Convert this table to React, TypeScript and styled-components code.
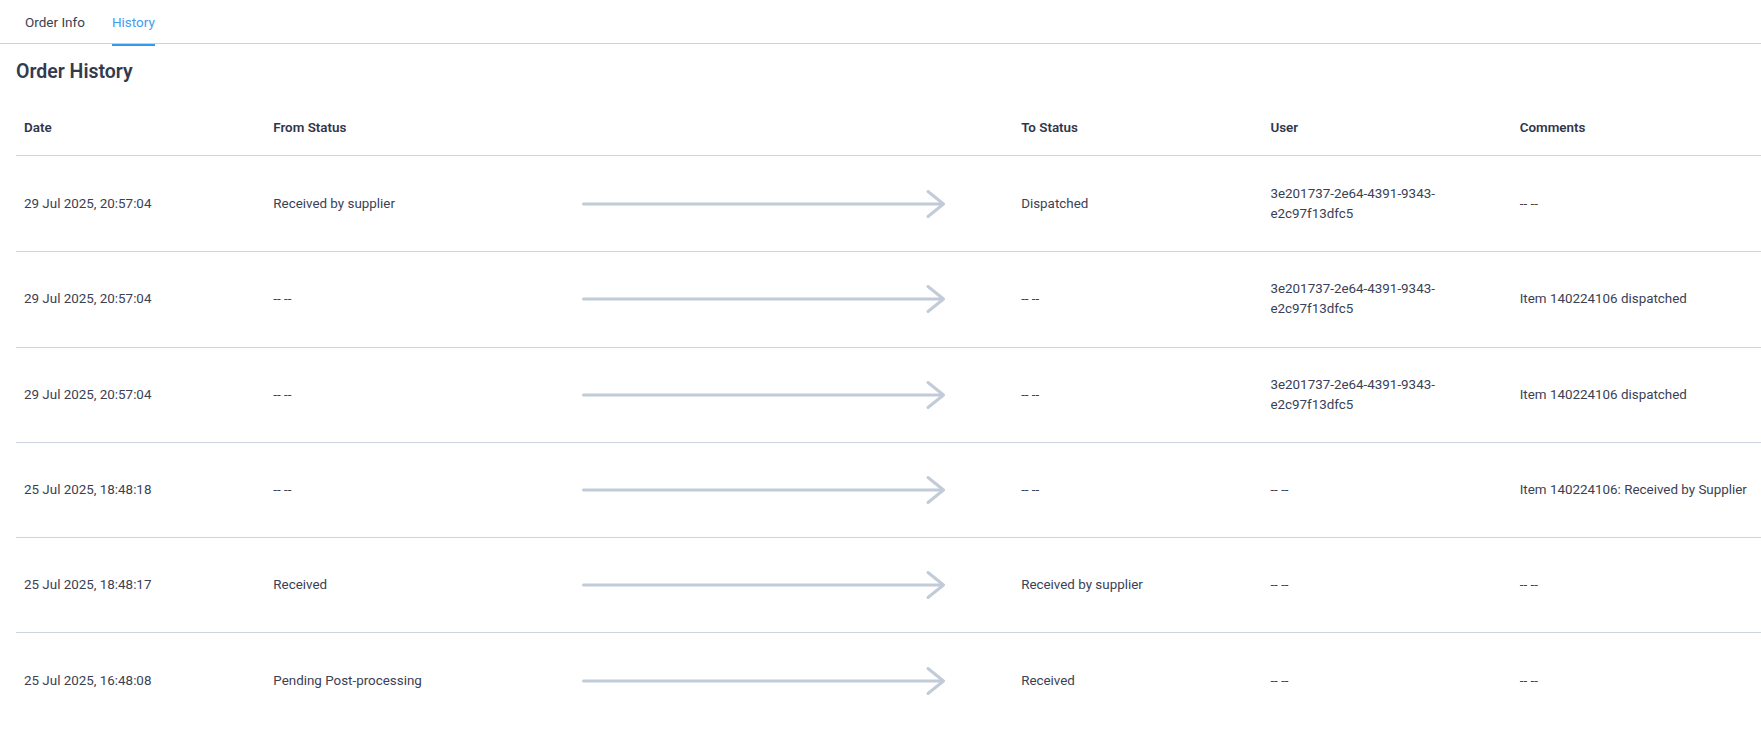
import React from "react";
import styled, { createGlobalStyle } from "styled-components";

const GlobalStyle = createGlobalStyle`
  * { box-sizing: border-box; }
  html, body { margin: 0; padding: 0; background: #ffffff; }
  body {
    font-family: Roboto, "Noto Sans", "Liberation Sans", sans-serif;
    color: #3b4154;
    -webkit-font-smoothing: antialiased;
  }
`;

const Page = styled.div`
  width: 1761px;
  background: #ffffff;
`;

const TabBar = styled.nav`
  display: flex;
  gap: 27px;
  height: 44px;
  padding-left: 25px;
  border-bottom: 1px solid #c9d1db;
`;

const Tab = styled.button<{ $active?: boolean }>`
  all: unset;
  display: flex;
  align-items: center;
  height: 43px;
  padding-bottom: 1px;
  font-family: Roboto, "Noto Sans", sans-serif;
  font-size: 13.5px;
  color: ${(p) => (p.$active ? "#3d9ef2" : "#3a3f50")};
  cursor: pointer;
  border-bottom: 2px solid ${(p) => (p.$active ? "#2f9bf0" : "transparent")};
`;

const Content = styled.section`
  padding: 16px 0 0 16px;
`;

const Title = styled.h2`
  margin: 0 0 16px 0;
  font-size: 19.5px;
  line-height: 24px;
  font-weight: 600;
  color: #343a4e;
`;

const Row = styled.div<{ $h: number }>`
  display: grid;
  grid-template-columns: repeat(7, 1fr);
  align-items: center;
  height: ${(p) => p.$h}px;
  border-bottom: 1px solid #cdd4de;
  &:last-child { border-bottom: none; }
`;

const HeadCell = styled.div<{ $span?: number }>`
  grid-column: span ${(p) => p.$span ?? 1};
  padding: 0 8px;
  font-size: 13.4px;
  font-weight: 600;
  color: #30364a;
`;

const Cell = styled.div`
  padding: 0 8px;
  font-size: 13.4px;
  line-height: 20px;
  color: #3b4154;
  overflow-wrap: break-word;
`;

const ArrowCell = styled.div`
  grid-column: span 2;
  display: flex;
  justify-content: center;
  align-items: center;
`;

const Arrow = () => (
  <svg width="364" height="30" viewBox="0 0 364 30" fill="none">
    <line x1="1.5" y1="15" x2="361" y2="15" stroke="#c2cbd8" strokeWidth="3" strokeLinecap="round" />
    <polyline points="346,2.5 361.5,15 346,27.5" stroke="#c2cbd8" strokeWidth="3" strokeLinecap="round" strokeLinejoin="round" />
  </svg>
);

type Entry = { date: string; from: string; to: string; user: string; comment: string };

const EMPTY = "-- --";
const USER = "3e201737-2e64-4391-9343-e2c97f13dfc5";

const entries: Entry[] = [
  { date: "29 Jul 2025, 20:57:04", from: "Received by supplier", to: "Dispatched", user: USER, comment: EMPTY },
  { date: "29 Jul 2025, 20:57:04", from: EMPTY, to: EMPTY, user: USER, comment: "Item 140224106 dispatched" },
  { date: "29 Jul 2025, 20:57:04", from: EMPTY, to: EMPTY, user: USER, comment: "Item 140224106 dispatched" },
  { date: "25 Jul 2025, 18:48:18", from: EMPTY, to: EMPTY, user: EMPTY, comment: "Item 140224106: Received by Supplier" },
  { date: "25 Jul 2025, 18:48:17", from: "Received", to: "Received by supplier", user: EMPTY, comment: EMPTY },
  { date: "25 Jul 2025, 16:48:08", from: "Pending Post-processing", to: "Received", user: EMPTY, comment: EMPTY },
];

const rowHeights = [96, 95.5, 95, 95.5, 95.25, 95.25];

export default function App() {
  return (
    <Page>
      <GlobalStyle />
      <TabBar>
        <Tab>Order Info</Tab>
        <Tab $active>History</Tab>
      </TabBar>
      <Content>
        <Title>Order History</Title>
        <div>
          <Row $h={56}>
            <HeadCell>Date</HeadCell>
            <HeadCell>From Status</HeadCell>
            <HeadCell $span={2} />
            <HeadCell>To Status</HeadCell>
            <HeadCell>User</HeadCell>
            <HeadCell>Comments</HeadCell>
          </Row>
          {entries.map((e, i) => (
            <Row key={i} $h={rowHeights[i]}>
              <Cell>{e.date}</Cell>
              <Cell>{e.from}</Cell>
              <ArrowCell>
                <Arrow />
              </ArrowCell>
              <Cell>{e.to}</Cell>
              <Cell>{e.user}</Cell>
              <Cell>{e.comment}</Cell>
            </Row>
          ))}
        </div>
      </Content>
    </Page>
  );
}
